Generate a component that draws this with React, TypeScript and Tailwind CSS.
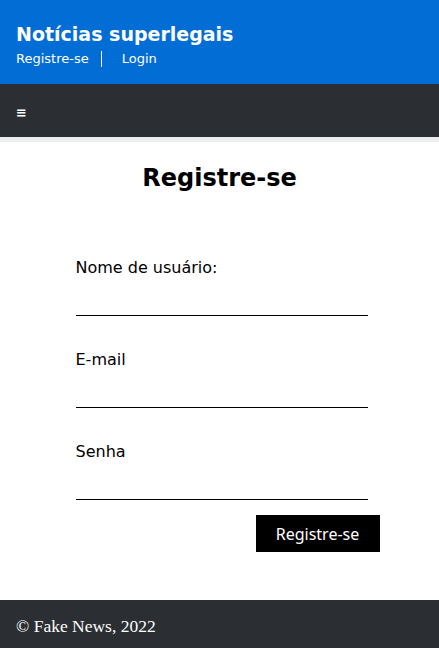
export default function App() {
	return (
		<div className="min-h-[648px] flex flex-col bg-white font-['DejaVu_Sans',sans-serif]">
			<header className="h-[84px] bg-[#036dd6] text-white px-4 pt-[22px]">
				<h1 className="text-[19px] font-bold leading-[25px]">
					Notícias superlegais
				</h1>
				<nav className="flex items-center text-[13px] leading-[16px] mt-[4px]">
					<a className="pr-3 border-r border-white">Registre-se</a>
					<a className="pl-5">Login</a>
				</nav>
			</header>
			<div className="h-[53px] bg-[#2b2f33] text-white px-4 flex items-center">
				<span className="text-[13px] font-bold leading-none mt-[3px]">≡</span>
			</div>
			<div className="h-[5px] bg-[#eceef0]" />
			<main className="flex-1 pb-[48px]">
				<h2 className="text-center text-[24px] font-bold leading-[30px] mt-[21px]">
					Registre-se
				</h2>
				<form className="w-[304px] mx-auto mt-[65px] pl-[8px]">
					<Field label="Nome de usuário:" className="mb-[34px]" />
					<Field label="E-mail" className="mb-[34px]" />
					<Field label="Senha" className="mb-[15px]" />
					<div className="flex justify-end mr-[-8px]">
						<button
							type="button"
							className="w-[124px] h-[37px] bg-black text-white text-[16px] font-['Noto_Sans',sans-serif]"
						>
							Registre-se
						</button>
					</div>
				</form>
			</main>
			<footer className="h-[48px] bg-[#2b2f33] text-white px-4 pt-[5px] flex items-center font-['Liberation_Serif',serif] text-[17.5px]">
				© Fake News, 2022
			</footer>
		</div>
	);
}

function Field({ label, className }: { label: string; className: string }) {
	return (
		<label className={"block " + className}>
			<span className="block text-[16px] leading-[20px]">{label}</span>
			<input className="block w-[292px] h-[37px] mt-[1px] border-b border-black outline-none" />
		</label>
	);
}
